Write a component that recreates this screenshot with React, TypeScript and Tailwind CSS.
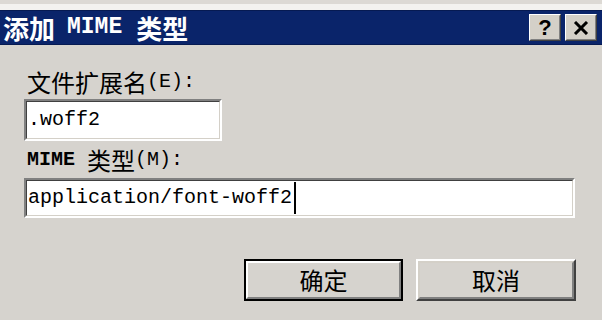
import React from "react";

function Cjk({ children, className = "" }: { children: React.ReactNode; className?: string }) {
  return (
    <span className={"font-['Noto_Sans_CJK_SC',sans-serif] " + className}>{children}</span>
  );
}

function Mono({ children, className = "" }: { children: React.ReactNode; className?: string }) {
  return (
    <span className={"font-['Liberation_Mono',monospace] " + className}>{children}</span>
  );
}

function Sunken({ className, children }: { className: string; children?: React.ReactNode }) {
  return (
    <div
      className={
        "border-2 border-t-[#808080] border-l-[#808080] border-r-white border-b-white " + className
      }
    >
      <div className="h-full w-full border border-t-[#404040] border-l-[#404040] border-r-[#d4d0c8] border-b-[#d4d0c8] bg-white flex items-center pl-[1px]">
        {children}
      </div>
    </div>
  );
}

function TitleBtn({ children }: { children: React.ReactNode }) {
  return (
    <div className="w-[32px] h-[27px] border border-t-white border-l-white border-r-[#404040] border-b-[#404040] bg-[#d4d0c8]">
      <div className="h-full w-full border border-t-[#d4d0c8] border-l-[#d4d0c8] border-r-[#808080] border-b-[#808080] flex items-center justify-center text-black text-[22px] font-bold leading-none font-['Liberation_Sans',sans-serif]">
        {children}
      </div>
    </div>
  );
}

export default function App() {
  return (
    <div className="w-[602px] h-[320px] bg-[#d6d3ce] flex flex-col overflow-hidden">
      <div className="h-[4px] bg-[#dcd9d4]" />
      <div className="h-[6px] bg-[#f3f2ef]" />
      <div className="h-[35px] bg-[#0a246a] border-t border-b border-[#061a52] flex items-center pl-[3px] pr-[5px]">
        <div className="flex items-center text-white font-bold leading-none">
          <Cjk className="text-[26px]">添加</Cjk>
          <Mono className="text-[23px] ml-[12px]">MIME</Mono>
          <Cjk className="text-[26px] ml-[14px]">类型</Cjk>
        </div>
        <div className="flex-1" />
        <div className="flex gap-[4px]">
          <TitleBtn>?</TitleBtn>
          <TitleBtn>
            <svg width="16" height="14" viewBox="0 0 16 14">
              <path d="M2 1 L14 13 M14 1 L2 13" stroke="black" strokeWidth="3" />
            </svg>
          </TitleBtn>
        </div>
      </div>

      <div className="flex flex-col pl-[24px] pt-[23px]">
        <div className="pl-[3px] h-[28px] flex items-center text-[#000] leading-none">
          <Cjk className="text-[24px]">文件扩展名</Cjk>
          <Mono className="text-[20px]">(E):</Mono>
        </div>
        <Sunken className="mt-[3px] w-[198px] h-[42px]">
          <Mono className="text-[20px] text-black leading-none">.woff2</Mono>
        </Sunken>
        <div className="mt-[5px] pl-[3px] h-[28px] flex items-center text-[#000] leading-none">
          <Mono className="text-[20px] font-bold">MIME</Mono>
          <Cjk className="text-[24px] ml-[12px]">类型</Cjk>
          <Mono className="text-[20px]">(M):</Mono>
        </div>
        <Sunken className="mt-[4px] w-[551px] h-[40px]">
          <Mono className="text-[20px] text-black leading-none">application/font-woff2</Mono>
          <span className="ml-[2px] inline-block w-[2px] h-[32px] bg-black" />
        </Sunken>

        <div className="mt-[41px] flex justify-end gap-[13px] pr-[26px]">
          <div className="w-[159px] h-[42px] border-2 border-black">
            <div className="h-full w-full border-2 border-t-white border-l-white border-r-[#808080] border-b-[#808080] flex items-center justify-center">
              <Cjk className="text-[24px] text-black leading-none">确定</Cjk>
            </div>
          </div>
          <div className="w-[160px] h-[42px] border-2 border-t-white border-l-white border-r-[#404040] border-b-[#404040]">
            <div className="h-full w-full border-2 border-t-[#d4d0c8] border-l-[#d4d0c8] border-r-[#808080] border-b-[#808080] flex items-center justify-center">
              <Cjk className="text-[24px] text-black leading-none">取消</Cjk>
            </div>
          </div>
        </div>
      </div>
    </div>
  );
}
